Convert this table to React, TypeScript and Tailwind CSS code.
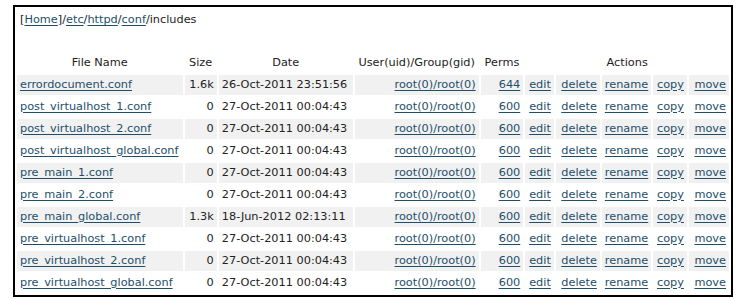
const files = [
  { name: "errordocument.conf", size: "1.6k", date: "26-Oct-2011 23:51:56", perms: "644" },
  { name: "post_virtualhost_1.conf", size: "0", date: "27-Oct-2011 00:04:43", perms: "600" },
  { name: "post_virtualhost_2.conf", size: "0", date: "27-Oct-2011 00:04:43", perms: "600" },
  { name: "post_virtualhost_global.conf", size: "0", date: "27-Oct-2011 00:04:43", perms: "600" },
  { name: "pre_main_1.conf", size: "0", date: "27-Oct-2011 00:04:43", perms: "600" },
  { name: "pre_main_2.conf", size: "0", date: "27-Oct-2011 00:04:43", perms: "600" },
  { name: "pre_main_global.conf", size: "1.3k", date: "18-Jun-2012 02:13:11", perms: "600" },
  { name: "pre_virtualhost_1.conf", size: "0", date: "27-Oct-2011 00:04:43", perms: "600" },
  { name: "pre_virtualhost_2.conf", size: "0", date: "27-Oct-2011 00:04:43", perms: "600" },
  { name: "pre_virtualhost_global.conf", size: "0", date: "27-Oct-2011 00:04:43", perms: "600" },
];

const actions = ["edit", "delete", "rename", "copy", "move"];

function A({ children }: { children: React.ReactNode }) {
  return (
    <a href="#" className="text-[#1d4f6b] underline underline-offset-2">
      {children}
    </a>
  );
}

export default function App() {
  return (
    <div className="bg-white min-h-[299px] pt-[5px] pl-[13px] text-[11.3px] text-[#222] [font-family:'DejaVu_Sans',Verdana,sans-serif]">
      <div className="w-[720px] border-2 border-black pt-[6px]">
        <div className="h-[14px] pl-[5px] leading-[14px]">
          [<A>Home</A>]/<A>etc</A>/<A>httpd</A>/<A>conf</A>/includes
        </div>

        <table className="mt-[24px] table-fixed border-separate border-spacing-[2px]">
          <colgroup>
            <col className="w-[166px]" />
            <col className="w-[33px]" />
            <col className="w-[135px]" />
            <col className="w-[127px]" />
            <col className="w-[46px]" />
            <col className="w-[29px]" />
            <col className="w-[45px]" />
            <col className="w-[48px]" />
            <col className="w-[34px]" />
            <col className="w-[41px]" />
          </colgroup>
          <thead>
            <tr className="h-[20px]">
              <th className="p-0 font-normal text-center">File Name</th>
              <th className="p-0 font-normal text-center">Size</th>
              <th className="p-0 font-normal text-center">Date</th>
              <th className="p-0 font-normal text-center">User(uid)/Group(gid)</th>
              <th className="p-0 font-normal text-center">Perms</th>
              <th colSpan={5} className="p-0 font-normal text-center">
                Actions
              </th>
            </tr>
          </thead>
          <tbody>
            {files.map((f, i) => {
              const bg = i % 2 === 0 ? "bg-[#f1f1f1]" : "bg-white";
              return (
                <tr key={f.name} className="h-[20px]">
                  <td className={`${bg} px-[3px] py-0 whitespace-nowrap`}>
                    <A>{f.name}</A>
                  </td>
                  <td className={`${bg} px-[3px] py-0 text-right`}>{f.size}</td>
                  <td className={`${bg} px-[3px] py-0 whitespace-nowrap`}>{f.date}</td>
                  <td className={`${bg} px-[3px] py-0 text-right`}>
                    <A>root(0)/root(0)</A>
                  </td>
                  <td className={`${bg} px-[3px] py-0 text-right`}>
                    <A>{f.perms}</A>
                  </td>
                  {actions.map((a) => (
                    <td key={a} className={`${bg} px-[3px] py-0 text-right`}>
                      <A>{a}</A>
                    </td>
                  ))}
                </tr>
              );
            })}
          </tbody>
        </table>
      </div>
    </div>
  );
}
